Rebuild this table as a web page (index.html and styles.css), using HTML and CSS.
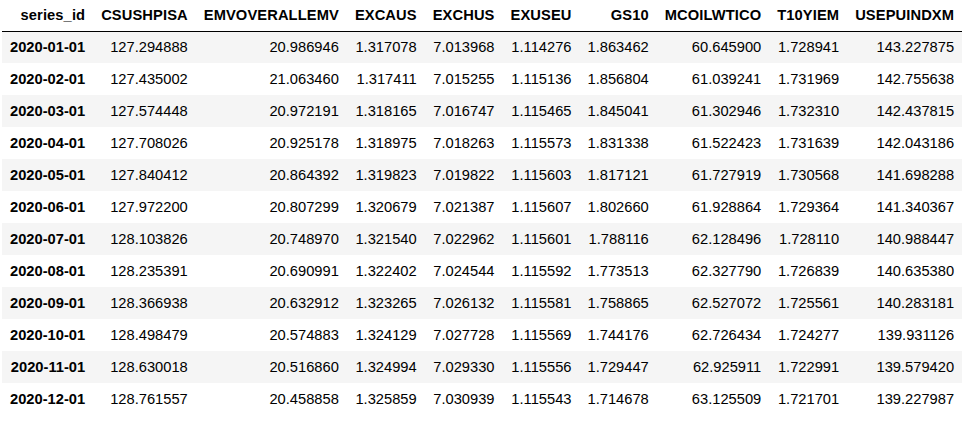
FILE: index.html
```html
<!DOCTYPE html>
<html>
<head>
<meta charset="utf-8">
<link rel="stylesheet" href="styles.css">
</head>
<body>
<div class="wrap">
<table class="df">
<thead>
<tr><th>series_id</th><th>CSUSHPISA</th><th>EMVOVERALLEMV</th><th>EXCAUS</th><th>EXCHUS</th><th>EXUSEU</th><th>GS10</th><th>MCOILWTICO</th><th>T10YIEM</th><th>USEPUINDXM</th></tr>
</thead>
<tbody>
<tr><th>2020-01-01</th><td>127.294888</td><td>20.986946</td><td>1.317078</td><td>7.013968</td><td>1.114276</td><td>1.863462</td><td>60.645900</td><td>1.728941</td><td>143.227875</td></tr>
<tr><th>2020-02-01</th><td>127.435002</td><td>21.063460</td><td>1.317411</td><td>7.015255</td><td>1.115136</td><td>1.856804</td><td>61.039241</td><td>1.731969</td><td>142.755638</td></tr>
<tr><th>2020-03-01</th><td>127.574448</td><td>20.972191</td><td>1.318165</td><td>7.016747</td><td>1.115465</td><td>1.845041</td><td>61.302946</td><td>1.732310</td><td>142.437815</td></tr>
<tr><th>2020-04-01</th><td>127.708026</td><td>20.925178</td><td>1.318975</td><td>7.018263</td><td>1.115573</td><td>1.831338</td><td>61.522423</td><td>1.731639</td><td>142.043186</td></tr>
<tr><th>2020-05-01</th><td>127.840412</td><td>20.864392</td><td>1.319823</td><td>7.019822</td><td>1.115603</td><td>1.817121</td><td>61.727919</td><td>1.730568</td><td>141.698288</td></tr>
<tr><th>2020-06-01</th><td>127.972200</td><td>20.807299</td><td>1.320679</td><td>7.021387</td><td>1.115607</td><td>1.802660</td><td>61.928864</td><td>1.729364</td><td>141.340367</td></tr>
<tr><th>2020-07-01</th><td>128.103826</td><td>20.748970</td><td>1.321540</td><td>7.022962</td><td>1.115601</td><td>1.788116</td><td>62.128496</td><td>1.728110</td><td>140.988447</td></tr>
<tr><th>2020-08-01</th><td>128.235391</td><td>20.690991</td><td>1.322402</td><td>7.024544</td><td>1.115592</td><td>1.773513</td><td>62.327790</td><td>1.726839</td><td>140.635380</td></tr>
<tr><th>2020-09-01</th><td>128.366938</td><td>20.632912</td><td>1.323265</td><td>7.026132</td><td>1.115581</td><td>1.758865</td><td>62.527072</td><td>1.725561</td><td>140.283181</td></tr>
<tr><th>2020-10-01</th><td>128.498479</td><td>20.574883</td><td>1.324129</td><td>7.027728</td><td>1.115569</td><td>1.744176</td><td>62.726434</td><td>1.724277</td><td>139.931126</td></tr>
<tr><th>2020-11-01</th><td>128.630018</td><td>20.516860</td><td>1.324994</td><td>7.029330</td><td>1.115556</td><td>1.729447</td><td>62.925911</td><td>1.722991</td><td>139.579420</td></tr>
<tr><th>2020-12-01</th><td>128.761557</td><td>20.458858</td><td>1.325859</td><td>7.030939</td><td>1.115543</td><td>1.714678</td><td>63.125509</td><td>1.721701</td><td>139.227987</td></tr>
</tbody>
</table>
</div>
</body>
</html>
```
FILE: styles.css
```css
html, body {
  margin: 0;
  padding: 0;
  background: #fff;
}
.wrap {
  padding: 0 2px;
}
.df {
  border-collapse: collapse;
  border-spacing: 0;
  font-family: "Liberation Sans", Arial, sans-serif;
  font-size: 14.7px;
  color: #000;
}
.df th,
.df td {
  text-align: right;
  vertical-align: middle;
  padding: 0 8px;
  height: 32px;
  box-sizing: border-box;
  white-space: nowrap;
}
.df th {
  font-weight: bold;
}
.df thead th {
  height: 31px;
  letter-spacing: 0.1px;
}
.df thead tr {
  border-bottom: 1px solid #000;
}
.df tbody tr:nth-child(odd) {
  background: #f5f5f5;
}
```
